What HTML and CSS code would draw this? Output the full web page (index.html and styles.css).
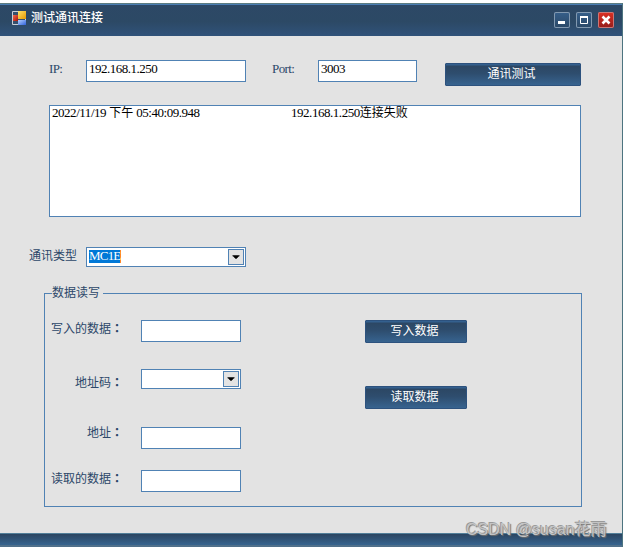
FILE: index.html
```html
<!DOCTYPE html>
<html lang="zh-CN">
<head>
<meta charset="utf-8">
<title>测试通讯连接</title>
<link rel="stylesheet" href="styles.css">
</head>
<body>
<main class="window">
  <header class="titlebar">
    <svg class="app-icon" width="14" height="14" viewBox="0 0 14 14">
      <defs>
        <linearGradient id="red" x2="1" y2="1"><stop stop-color="#f26a4c"/><stop offset="1" stop-color="#a81208"/></linearGradient>
        <linearGradient id="gold" x2="1" y2="1"><stop stop-color="#ffe16a"/><stop offset="1" stop-color="#e59a00"/></linearGradient>
        <linearGradient id="blue" x2="1" y2="1"><stop stop-color="#b4d0ff"/><stop offset="1" stop-color="#2f62dc"/></linearGradient>
      </defs>
      <path d="M.5 .5H13.500V13.500H.5Z" fill="#36506e" stroke="#c8ced6"/>
      <path d="M1 4H6V10H1Z" fill="url(#red)"/>
      <path d="M6 0H14V8H6Z" fill="url(#gold)"/>
      <path d="M6 9H14V14H6Z" fill="url(#blue)"/>
    </svg>
    <h1 class="title">测试通讯连接</h1>
    <div class="controls">
      <svg class="control" viewBox="0 0 16 16"><path d="M4 10.500H11" stroke="#fff" stroke-width="3"/></svg>
      <svg class="control" viewBox="0 0 16 16"><path d="M4.500 5V11.500H11.500V5" fill="none" stroke="#fff"/><path d="M4 5H12" stroke="#fff" stroke-width="2"/></svg>
      <svg class="control close" viewBox="0 0 16 16"><path d="M4.500 4.500L11.500 11.500M11.500 4.500L4.500 11.500" stroke="#fff" stroke-width="2.600"/></svg>
    </div>
  </header>

  <section class="content">
    <div class="connection">
      <span class="label ip-label">IP:</span>
      <div class="field ip">192.168.1.250</div>
      <span class="label port-label">Port:</span>
      <div class="field port">3003</div>
      <div class="button test">通讯测试</div>
    </div>

    <div class="log">
      <span class="log-time"><span class="num">2022/11/19</span> 下午 <span class="num">05:40:09.948</span></span>
      <span><span class="num">192.168.1.250</span>连接失败</span>
    </div>

    <div class="protocol">
      <span class="label">通讯类型</span>
      <div class="field combo"><span class="selected">MC1E</span>
        <svg class="arrow" viewBox="0 0 16 16"><path d="M4 6H12V7H11V8H10V9H9V10H7V9H6V8H5V7H4Z"/></svg>
      </div>
    </div>

    <div class="group">
      <div class="legend">数据读写</div>
      <div class="form">
        <div class="row write"><span class="label">写入的数据<span class="colon" lang="zh-TW">：</span></span><div class="field"></div><div class="button">写入数据</div></div>
        <div class="row code"><span class="label">地址码<span class="colon" lang="zh-TW">：</span></span><div class="field combo">
          <svg class="arrow" viewBox="0 0 16 16"><path d="M4 6H12V7H11V8H10V9H9V10H7V9H6V8H5V7H4Z"/></svg></div><div class="button">读取数据</div></div>
        <div class="row address"><span class="label">地址<span class="colon" lang="zh-TW">：</span></span><div class="field"></div></div>
        <div class="row read"><span class="label">读取的数据<span class="colon" lang="zh-TW">：</span></span><div class="field"></div></div>
      </div>
    </div>
  </section>
  <footer class="statusbar"></footer>
  <div class="watermark">CSDN @susan花雨</div>
</main>
</body>
</html>
```
FILE: styles.css
```css
* { box-sizing: border-box; }

body {
  margin: 0;
  padding-top: 3px;
  background: #fff;
  color: #000;
  font: 12px/16px "Liberation Serif", "Noto Sans CJK SC", serif;
}

.window {
  position: relative;
  height: 544px;
  display: flex;
  flex-direction: column;
  background: #e3e3e3;
  border-right: 1px solid #4d7480;
}

.titlebar {
  height: 33px;
  flex: none;
  display: flex;
  align-items: flex-start;
  padding: 7px 8px 0 12px;
  border-top: 1px solid #5b7c82;
  box-shadow: inset 0 1px #4a7db3;
  background: linear-gradient(#2d4866, #2c4965 55%, #30527a);
}

.app-icon { flex: none; }

.title {
  margin: -3px 0 0 5px;
  color: #fff;
  font: 500 12px/18px "Noto Sans CJK SC", sans-serif;
}

.controls { display: flex; gap: 6px; margin: 1px 0 0 auto; }

.control {
  width: 16px;
  height: 16px;
  border-radius: 2px;
  background: linear-gradient(#365f8a, #2a4867);
  box-shadow: inset 0 0 0 1px #8299b0;
}

.close {
  background: linear-gradient(#de3023, #921d1b);
  box-shadow: inset 0 0 0 1px #ca7776;
}

.content { flex: 1; padding-top: 24px; }

.label, .legend { color: #2c4769; white-space: nowrap; }

.field {
  height: 22px;
  flex: none;
  border: 1px solid #5082b4;
  background: #fff;
  padding: 0 2px;
  font-size: 13px;
  letter-spacing: -0.5px;
}

.num { font-size: 13px; letter-spacing: -0.46px; }

.connection { display: flex; height: 45px; }
.ip-label, .port-label { font-size: 13px; letter-spacing: -0.6px; margin-top: 1px; }
.ip-label { width: 37px; margin-left: 49px; }
.ip { width: 160px; }
.port-label { width: 46px; margin-left: 26px; }
.port { width: 99px; }

.button {
  width: 102px;
  height: 23px;
  flex: none;
  padding-right: 3px;
  border: 1px solid #2d527e;
  border-radius: 1px;
  background: linear-gradient(#34608e 0 1px, #2c4764 2px, #2e4d6e 45%, #37638f);
  color: #fff;
  text-align: center;
  line-height: 21px;
}

.test { width: 136px; margin: 3px 0 0 28px; }

.log {
  width: 532px;
  height: 112px;
  display: flex;
  margin-left: 49px;
  padding-left: 2px;
  border: 1px solid #5082b4;
  background: #fff;
  line-height: 14px;
}

.log-time { width: 239px; }

.protocol { display: flex; margin-top: 30px; }
.protocol .label { width: 57px; margin: 1px 0 0 29px; }

.combo {
  height: 20px;
  display: flex;
  align-items: flex-start;
  padding: 1px 1px 0 2px;
}

.protocol .combo { width: 160px; }

.selected {
  width: 32px;
  height: 13px;
  margin-top: 1px;
  border-right: 1px solid #ff8728;
  background: #0078d7;
  color: #fff;
  letter-spacing: -0.8px;
  line-height: 12px;
}

.arrow {
  width: 16px;
  height: 16px;
  margin-left: auto;
  border: 1px solid #5082b4;
  background: #e3e3e3;
}

.group {
  width: 538px;
  height: 214px;
  margin: 26px 0 0 44px;
  border: 1px solid #5082b4;
}

.legend {
  width: 51px;
  margin: -9px 0 0 7px;
  background: #e3e3e3;
}

.form { display: grid; grid-template-rows: 49px 58px 43px 22px; margin-top: 19px; }
.row { display: flex; align-items: flex-start; }
.row .label { width: 78px; margin: 1px 18px 0 0; text-align: right; }
.row .field { width: 100px; }
.row .button { margin-left: 124px; }
.code .label { margin-top: 6px; }
.code .button { margin-top: 17px; }
.address .label { margin-top: -2px; }

.colon { font-family: "Noto Sans CJK TC", sans-serif; font-weight: 700; line-height: 1; }

.statusbar {
  height: 14px;
  flex: none;
  border-top: 1px solid #517e99;
  border-bottom: 2px solid #50708b;
  background: linear-gradient(#2b4561, #37648f);
}

.watermark {
  position: absolute;
  left: 466px;
  top: 515px;
  color: #c4c4c4;
  font: 16px/24px "Liberation Sans", "Noto Sans CJK SC", sans-serif;
  text-shadow: -1px -1px #9a9a9a, 1px 1px 1px #707070;
  white-space: nowrap;
}
```
